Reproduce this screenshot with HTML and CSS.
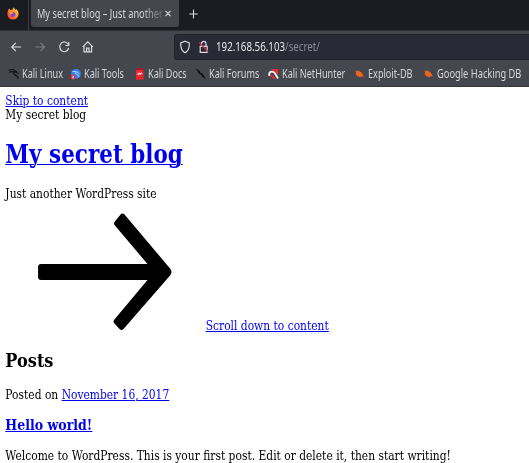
FILE: index.html
```html
<!DOCTYPE html>
<html lang="en">
<head>
<meta charset="utf-8">
<title>My secret blog – Just another WordPress site</title>
<link rel="stylesheet" href="styles.css">
</head>
<body>
<header class="browser">
  <div class="tabs">
    <div class="pinned">
      <svg width="12" height="13" viewBox="0 0 12 13"><defs><linearGradient id="fire" x1="1" y1="0" x2="0" y2="1"><stop offset="0" stop-color="#ffe33c"/><stop offset=".5" stop-color="#ff8a20"/><stop offset="1" stop-color="#f5264b"/></linearGradient></defs><path fill="url(#fire)" d="M1.2 3 2.3 1.600 3.400 3 5.300 2.700 6.600.3 8.500 3l.6-1C11 3.600 11.800 5.400 11.500 7.500 11 10.700 8.800 12.600 6 12.600 2.700 12.600.5 10.300.5 7.200.5 5.500.6 4.200 1.200 3Z"/><circle cx="5.800" cy="7.300" r="2.600" fill="#8542dc"/><path fill="#ff9a22" d="M2.500 4.500 5.600 5 6.200 6 4.600 7 3.400 8Z"/></svg>
    </div>
    <div class="tab">
      <div class="tab-title"><span class="label">My secret blog – Just another</span></div>
      <svg class="close" width="6" height="7" viewBox="0 0 6 7"><path d="M.5.8 5.500 6.200M5.500.8.5 6.200"/></svg>
    </div>
    <svg class="plus" width="9" height="10" viewBox="0 0 9 10"><path d="M4.500.5v9M.3 5h8.400"/></svg>
  </div>
  <div class="toolbar">
    <svg width="100" height="16" viewBox="0 0 100 16">
      <path d="M21 8H12M15.800 3.800 11.800 8l4 4.200"/>
      <path class="dim" d="M35.500 8h9M40.500 3.800 44.500 8l-4 4.200"/>
      <path d="M68.200 5.500A4.500 4.900 0 1 0 68.600 9M68.800 3v3.500h-3.500"/>
      <path d="m82.800 7.800 5-5 5 5M84 7v5.800h7.600V7M86.600 12.600V9.200h2.400v3.400"/>
    </svg>
    <div class="address">
      <svg width="34" height="16" viewBox="0 0 34 16">
        <path d="M10 2.200 14.300 4C14.600 8.500 13.500 11.800 10 13.700 6.500 11.800 5.400 8.500 5.700 4Z"/>
        <path d="M25.200 7.300h7v6h-7zM26.500 7V5c0-3.600 4.500-3.600 4.500 0v2"/>
        <path class="slash" d="m24.200 3.500 9 9.300"/>
      </svg>
      <span class="label url">192.168.56.103<span class="path">/secret/</span></span>
    </div>
  </div>
  <nav class="bookmarks">
    <a><svg width="12" height="12" viewBox="0 0 12 12"><path fill="none" stroke="#15161a" stroke-width="1.200" d="M.5 2 5 1.600 9 4M1 4.200 5.500 3.500 10.800 5.500M5.500 4C4 7.500 10 6 10.300 11"/></svg><span class="label">Kali Linux</span></a>
    <a><svg width="12" height="12" viewBox="0 0 12 12"><circle cx="6" cy="5.800" r="4.900" fill="#3182f2"/><path fill="none" stroke="#dbe8fc" stroke-width=".8" d="M2.500 3.500 7 3.800 9.500 6M6 4C5 7 8.500 6 9 9"/><rect x="1" y="6.500" width="4" height="5" rx="1" fill="#df3442"/><path stroke="#fff" d="M3 7.800v2.600"/></svg><span class="label">Kali Tools</span></a>
    <a><svg width="12" height="12" viewBox="0 0 12 12"><path fill="#ec2430" d="M2 .3h7.500v11.400H2Z"/><path fill="#8e1722" d="M2 .3h7.500v1.500H2Z"/><path fill="none" stroke="#fff" stroke-width=".9" d="m2.800 5.800 1.200 1 1-2 1.200 2 1-2 1.200 1"/></svg><span class="label">Kali Docs</span></a>
    <a><svg width="12" height="12" viewBox="0 0 12 12"><path fill="#0d0e10" d="m.3.2 4.200 2.600.8 1.700 2.800 1.700.6 1.600 2.500 3.700-4-2.700-.8-1.800-2.900-1.800L2.600 3.300Z"/></svg><span class="label">Kali Forums</span></a>
    <a><svg width="12" height="12" viewBox="0 0 12 12"><path fill="#ee2631" d="M3.500 1H10v7L7.500 5.500Z"/><path fill="none" stroke="#f2f2f2" stroke-width="1.800" d="M1.500 8C0 3.500 4.500 2.500 6.700 5l3.300 5.500"/><path fill="none" stroke="#ee2631" stroke-width="1.700" d="m2.500 7.500 4.500 3.300"/></svg><span class="label">Kali NetHunter</span></a>
    <a><svg width="12" height="12" viewBox="0 0 12 12"><path fill="#ef6416" d="M1.500 2.500 3.500 3 4.700 2.300l1 1.200 1.800 1 1 1.600 1.300 2.700L7.500 8.300 6.300 9.500 5 8.500 3.300 8.300 2.900 7 1.300 6.300 2.200 5Z"/></svg><span class="label">Exploit-DB</span></a>
    <a><svg width="12" height="12" viewBox="0 0 12 12"><path fill="#ef6416" d="M1.500 2.500 3.500 3 4.700 2.300l1 1.200 1.800 1 1 1.600 1.300 2.700L7.500 8.300 6.300 9.500 5 8.500 3.300 8.300 2.900 7 1.300 6.300 2.200 5Z"/></svg><span class="label wide">Google Hacking DB</span></a>
  </nav>
</header>
<main class="page">
  <a href="#content">Skip to content</a>
  <div>My secret blog</div>
  <h1><a href="#">My secret blog</a></h1>
  <p class="tagline">Just another WordPress site</p>
  <div class="scroll"><svg class="arrow" viewBox="0 0 200.500 117" preserveAspectRatio="none"><path d="M36 51H142.500L109.500 12Q108.500 10.500 109.500 9L115.500 1.500Q117.500-.3 119.500 1.500L165.500 56Q167.500 59 165.500 62L118.500 116Q116.500 118 114.500 116L109 110Q108 108.500 109 107L142.500 67H36Q33 67 33 64V54Q33 51 36 51Z"/></svg><a href="#content">Scroll down to content</a></div>
  <h2>Posts</h2>
  <p id="content">Posted on <a href="#">November 16, 2017</a></p>
  <h3><a href="#">Hello world!</a></h3>
  <p>Welcome to WordPress. This is your first post. Edit or delete it, then start writing!</p>
</main>
</body>
</html>
```
FILE: styles.css
```css
* { box-sizing: border-box; }
html { overflow: hidden; }
body { margin: 0; background: #fff; overflow: hidden; height: 463px; }
svg { flex: none; overflow: visible; }

.browser {
  height: 87px;
  background: #45474e;
  border-bottom: 1px solid #34363b;
  font: 12.4px/16px "Noto Sans", sans-serif;
  color: #d6d7da;
  overflow: hidden;
}
.label {
  display: block;
  white-space: nowrap;
  transform: scaleX(.735);
  transform-origin: 0 50%;
}

.tabs { height: 31px; display: flex; background: #1b1c21; border-bottom: 1px solid #303238; }
.pinned { width: 29px; padding: 7px 0 0 7px; border-right: 1px solid #393b40; }
.tab {
  width: 148px;
  height: 27px;
  margin-left: 2px;
  padding: 0 7px 0 6px;
  display: flex;
  align-items: center;
  border-radius: 0 0 3px 3px;
  background: #45474e;
}
.tab-title {
  width: 127px;
  -webkit-mask-image: linear-gradient(90deg, #000 105px, transparent 130px);
  mask-image: linear-gradient(90deg, #000 105px, transparent 130px);
}
.tab-title .label { width: 127px; padding-top: 1px; transform: scaleX(.745); }
.close { margin-left: 1px; }
.close, .plus { fill: none; stroke: #d8d9dc; stroke-width: 1.1; }
.plus { margin: 9px 0 0 10px; }

.toolbar { height: 31px; padding: 2px 0 1px; display: flex; align-items: center; }
.toolbar svg { fill: none; stroke: #d8d9dc; stroke-width: 1.2; }
.toolbar .dim { stroke: #7d7f85; }
.toolbar .slash { stroke: #d92b55; }
.address {
  height: 26px;
  margin-left: 74px;
  flex: 1;
  display: flex;
  align-items: center;
  border: 1px solid #202229;
  border-right: 0;
  border-radius: 3px 0 0 3px;
  background: #282a35;
}
.url { margin-left: 7px; transform: scaleX(.785); color: #e6e6ea; }
.path { color: #898b94; }

.bookmarks {
  height: 24px;
  padding-left: 8px;
  display: grid;
  grid-template-columns: 62px 64px 61px 73px 86px 69px 1fr;
}
.bookmarks a { display: flex; align-items: center; gap: 2px; min-width: 0; }
.wide { transform: scaleX(.75); }

.page {
  width: 529px;
  padding: 6.7px 0 0 6.3px;
  transform: scaleX(.849);
  transform-origin: 0 0;
  font: 12.6px/14.8px "DejaVu Serif", serif;
  color: #000;
}
.page a { color: #0000ee; text-decoration: underline; text-decoration-thickness: 1px; }
h1 { margin: 16.7px 0 17.4px; font-size: 25.3px; line-height: 29.4px; }
h2 { margin: 15.8px 0 17.2px; font-size: 19px; line-height: 22px; }
h3 { margin: 13.4px 0 15.4px; font-size: 14.8px; line-height: 17px; }
p { margin: 12.6px 0; white-space: nowrap; }
.tagline { margin-bottom: 11.4px; }
.scroll { height: 120px; white-space: nowrap; }
.arrow { width: 236px; height: 117px; fill: #000; }
```
